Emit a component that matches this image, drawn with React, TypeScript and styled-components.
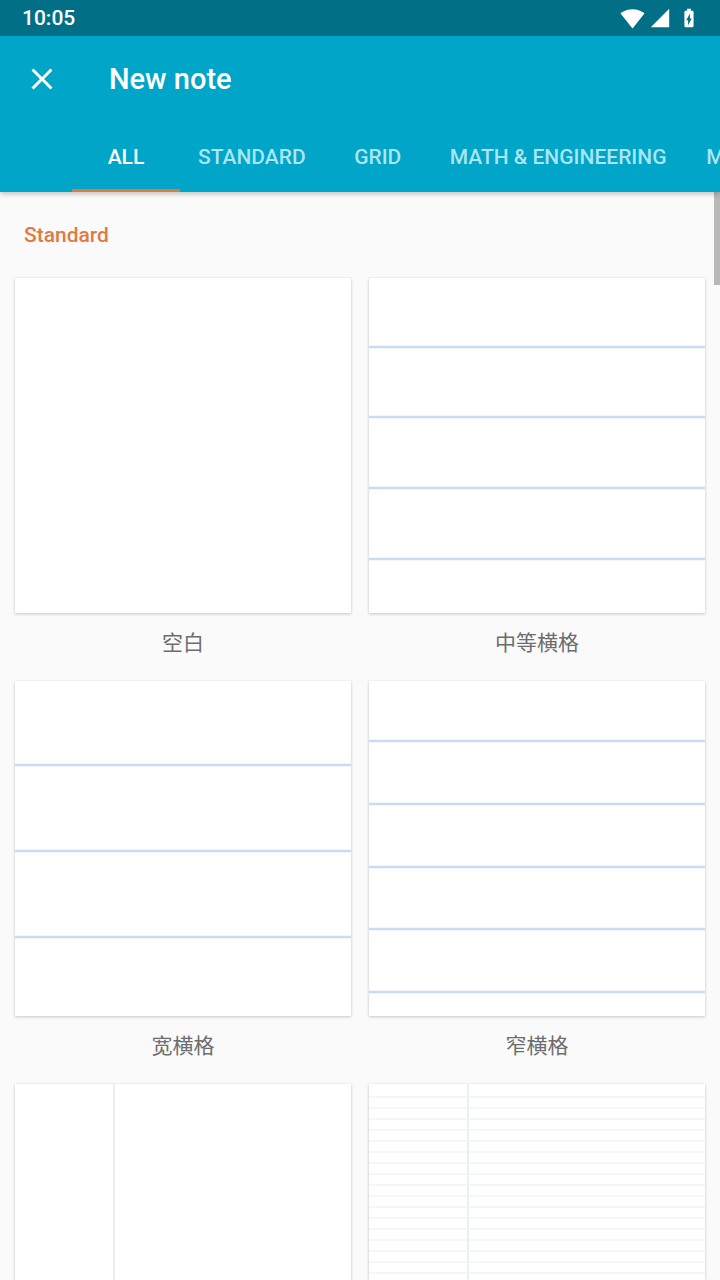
import React from "react";
import styled, { createGlobalStyle } from "styled-components";

const Global = createGlobalStyle`
  html, body { margin: 0; padding: 0; }
  body { font-family: Roboto, "Noto Sans", "Noto Sans CJK SC", sans-serif; background: #fafafa; }
`;

const Page = styled.div`
  width: 720px;
  height: 1280px;
  overflow: hidden;
  position: relative;
  background: #fafafa;
  display: flex;
  flex-direction: column;
`;

const Header = styled.header`
  background: #00a5c7;
  box-shadow: 0 2px 5px rgba(0, 0, 0, 0.22);
  position: relative;
  z-index: 2;
  flex: none;
`;

const StatusBar = styled.div`
  height: 36px;
  background: #016f85;
  display: flex;
  align-items: center;
  justify-content: space-between;
  padding: 0 20px 0 22px;
  color: #fff;
  font-size: 21px;
  font-weight: 500;
`;

const StatusIcons = styled.div`
  display: flex;
  align-items: center;
  gap: 4px;
`;

const Toolbar = styled.div`
  height: 84px;
  display: flex;
  align-items: center;
  padding-left: 24px;
  padding-top: 2px;
  box-sizing: border-box;
`;

const IconButton = styled.button`
  width: 36px;
  height: 36px;
  padding: 0;
  border: 0;
  background: none;
  display: flex;
  align-items: center;
  justify-content: center;
  margin-right: 49px;
`;

const Title = styled.h1`
  margin: 0;
  color: #fff;
  font-size: 29px;
  font-weight: 500;
  line-height: 36px;
`;

const TabRow = styled.div`
  height: 72px;
  display: flex;
  padding-left: 72px;
  overflow: hidden;
  white-space: nowrap;
`;

const Tab = styled.div<{ $active?: boolean }>`
  flex: none;
  min-width: 108px;
  box-sizing: border-box;
  padding: 5px 18px 0;
  display: flex;
  align-items: center;
  justify-content: center;
  font-size: 21px;
  font-weight: 500;
  text-transform: uppercase;
  color: ${(p) => (p.$active ? "#ffffff" : "rgba(210, 245, 252, 0.82)")};
  border-bottom: 3px solid ${(p) => (p.$active ? "#e07b40" : "transparent")};
`;

const Content = styled.main`
  flex: 1;
  position: relative;
`;

const SectionTitle = styled.h2`
  margin: 0;
  padding: 31px 24px 0;
  height: 24px;
  line-height: 24px;
  font-size: 21px;
  font-weight: 500;
  color: #e07b40;
`;

const Grid = styled.div`
  display: grid;
  grid-template-columns: 336px 336px;
  column-gap: 18px;
  row-gap: 25px;
  padding: 31px 15px 0;
`;

const Item = styled.div`
  display: flex;
  flex-direction: column;
`;

const Card = styled.div`
  width: 336px;
  height: 335px;
  background: #fff;
  box-shadow: 0 1px 3px rgba(0, 0, 0, 0.2), 0 0 1px rgba(0, 0, 0, 0.08);
  overflow: hidden;
`;

const Label = styled.div`
  margin-top: 13px;
  height: 30px;
  line-height: 30px;
  text-align: center;
  font-family: "Noto Sans CJK SC", "Noto Sans", sans-serif;
  font-size: 21px;
  color: #6d6d6d;
`;

const ScrollThumb = styled.div`
  position: absolute;
  right: 0;
  top: 0;
  width: 6px;
  height: 93px;
  background: #b8b8b8;
`;

type Paper = {
  label: string;
  hLines?: number[];
  hColor?: string;
  hWidth?: number;
  vLine?: { x: number; color: string };
};

const rule = (start: number, step: number, end: number) => {
  const out: number[] = [];
  for (let y = start; y < end; y += step) out.push(y);
  return out;
};

const papers: Paper[] = [
  { label: "空白" },
  { label: "中等横格", hLines: [69, 139, 210, 281], hColor: "#c9dcf3", hWidth: 2.5 },
  { label: "宽横格", hLines: [84, 170, 256], hColor: "#c9dcf3", hWidth: 2.5 },
  { label: "窄横格", hLines: [60, 123, 186, 248, 311], hColor: "#c9dcf3", hWidth: 2.5 },
  { label: "", vLine: { x: 99, color: "#ededed" } },
  {
    label: "",
    hLines: rule(13, 11, 335),
    hColor: "#eceef1",
    hWidth: 1.2,
    vLine: { x: 99, color: "#e4f1f6" },
  },
];

const PaperArt: React.FC<{ p: Paper }> = ({ p }) => (
  <svg width="336" height="335" viewBox="0 0 336 335">
    {p.hLines?.map((y) => (
      <line key={y} x1="0" x2="336" y1={y} y2={y} stroke={p.hColor} strokeWidth={p.hWidth} />
    ))}
    {p.vLine && (
      <line x1={p.vLine.x} x2={p.vLine.x} y1="0" y2="335" stroke={p.vLine.color} strokeWidth="2" />
    )}
  </svg>
);

export default function App() {
  return (
    <Page>
      <Global />
      <Header>
        <StatusBar>
          <span>10:05</span>
          <StatusIcons>
            <svg width="25" height="25" viewBox="0 0 24 24">
              <path
                fill="#fff"
                d="M12.01 21.49L23.64 7c-.45-.34-4.93-4-11.64-4C5.28 3 .81 6.66.36 7l11.63 14.49.01.01.01-.01z"
              />
            </svg>
            <svg width="22" height="22" viewBox="0 0 24 24">
              <path fill="#fff" d="M2 22h20V2z" />
            </svg>
            <svg width="22" height="22" viewBox="0 0 24 24" style={{ marginLeft: 3 }}>
              <path
                fill="#fff"
                fillRule="evenodd"
                d="M15.67 4H14V2h-4v2H8.33C7.6 4 7 4.6 7 5.33v15.33C7 21.4 7.6 22 8.33 22h7.33c.74 0 1.34-.6 1.34-1.33V5.33C17 4.6 16.4 4 15.67 4zM11 20v-5.5H9L13 7v5.5h2L11 20z"
              />
            </svg>
          </StatusIcons>
        </StatusBar>
        <Toolbar>
          <IconButton aria-label="close">
            <svg width="36" height="36" viewBox="0 0 24 24">
              <path
                fill="#fff"
                d="M19 6.41L17.59 5 12 10.59 6.41 5 5 6.41 10.59 12 5 17.59 6.41 19 12 13.41 17.59 19 19 17.59 13.41 12z"
              />
            </svg>
          </IconButton>
          <Title>New note</Title>
        </Toolbar>
        <TabRow>
          <Tab $active>All</Tab>
          <Tab>Standard</Tab>
          <Tab>Grid</Tab>
          <Tab>Math &amp; Engineering</Tab>
          <Tab>Music</Tab>
        </TabRow>
      </Header>
      <Content>
        <ScrollThumb />
        <SectionTitle>Standard</SectionTitle>
        <Grid>
          {papers.map((p, i) => (
            <Item key={i}>
              <Card>
                <PaperArt p={p} />
              </Card>
              {p.label && <Label>{p.label}</Label>}
            </Item>
          ))}
        </Grid>
      </Content>
    </Page>
  );
}
